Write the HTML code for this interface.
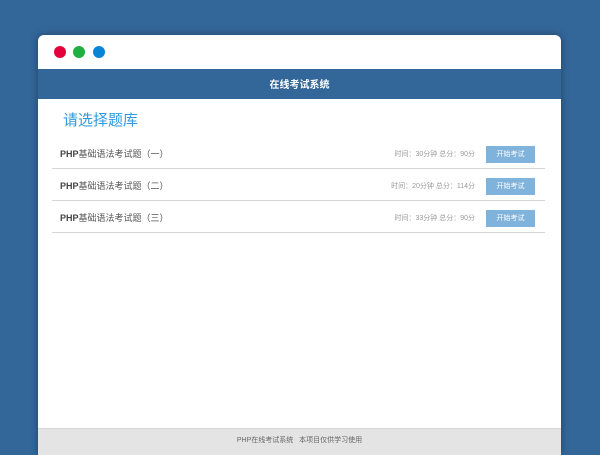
<!DOCTYPE html>
<html><head><meta charset="utf-8"><style>
*{margin:0;padding:0;box-sizing:border-box}
body{width:600px;height:450px;background:#336699;overflow:hidden;position:relative;font-family:"Liberation Sans","Noto Sans CJK SC",sans-serif}
.win{position:absolute;left:38px;top:35px;width:523px;height:420px;background:#fff;border-radius:6px 6px 0 0;box-shadow:0 0 8px rgba(0,0,0,.35);overflow:hidden}
.dot{position:absolute;top:11px;width:12px;height:12px;border-radius:50%}
.hdr{position:absolute;top:34px;left:0;width:100%;height:30px;background:#336699;color:#fff;font-size:10px;font-weight:bold;text-align:center;line-height:33px}
.title{position:absolute;left:25px;top:74px;font-size:15px;color:#2f9ae0}
.row{position:absolute;left:14px;width:493px;height:32px;border-bottom:1.5px solid #d6d6d6}
.name{position:absolute;left:8px;top:10px;font-size:9px;color:#555}
.name b{font-weight:bold;color:#444}
.info{position:absolute;right:70px;top:12px;font-size:7px;color:#999}
.btn{position:absolute;right:10px;top:9px;width:49px;height:17px;background:#7fb3dc;color:#fff;font-size:7px;text-align:center;line-height:17px}
.foot{position:absolute;left:0;top:393px;width:100%;height:30px;background:#e5e4e4;border-top:1px solid #d8d8d8;text-align:center;font-size:7px;color:#666;line-height:24px}
</style></head><body>
<div class="win">
<div class="dot" style="left:16px;background:#e4003a"></div>
<div class="dot" style="left:35px;background:#1fb040"></div>
<div class="dot" style="left:55px;background:#0c84d6"></div>
<div class="hdr">在线考试系统</div>
<div class="title">请选择题库</div>
<div class="row" style="top:102px"><div class="name"><b>PHP</b>基础语法考试题（一）</div><div class="info">时间：30分钟 总分：90分</div><div class="btn">开始考试</div></div>
<div class="row" style="top:134px"><div class="name"><b>PHP</b>基础语法考试题（二）</div><div class="info">时间：20分钟 总分：114分</div><div class="btn">开始考试</div></div>
<div class="row" style="top:166px"><div class="name"><b>PHP</b>基础语法考试题（三）</div><div class="info">时间：33分钟 总分：90分</div><div class="btn">开始考试</div></div>
<div class="foot">PHP在线考试系统 &nbsp; 本项目仅供学习使用</div>
</div>
</body></html>
